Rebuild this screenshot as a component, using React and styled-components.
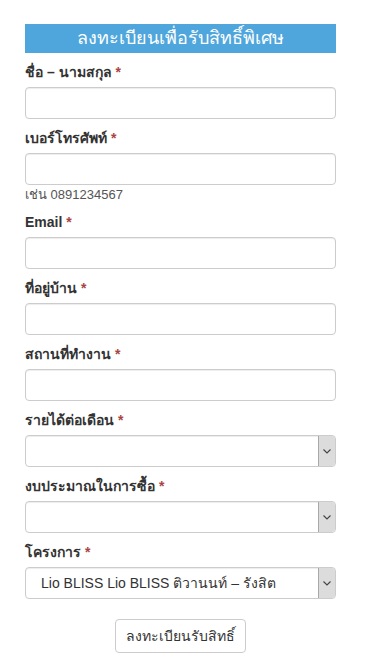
import React from 'react';
import styled, { createGlobalStyle } from 'styled-components';

const GlobalStyle = createGlobalStyle`
  body {
    margin: 0;
    background: #fff;
    font-family: "Liberation Sans", "Noto Sans", sans-serif;
    color: #333;
  }
`;

const Page = styled.div`
  width: 311px;
  padding: 24px 0 0 25px;
`;

const Header = styled.h2`
  margin: 0 0 10px;
  height: 29px;
  line-height: 29px;
  background-color: #4ea6dc;
  color: #fff;
  font-size: 18px;
  font-weight: 400;
  text-align: center;
`;

const Group = styled.div`
  margin-bottom: 10px;
`;

const Label = styled.label`
  display: block;
  height: 18px;
  line-height: 18px;
  margin-bottom: 6px;
  font-size: 14px;
  font-weight: 700;
  color: #333;
`;

const Star = styled.span`
  color: #a94442;
`;

const Input = styled.input`
  display: block;
  box-sizing: border-box;
  width: 100%;
  height: 32px;
  margin: 0;
  padding: 6px 12px;
  border: 1px solid #ccc;
  border-radius: 4px;
  box-shadow: inset 0 1px 1px rgba(0, 0, 0, 0.075);
  font-family: inherit;
  font-size: 14px;
`;

const Help = styled.div`
  margin-top: 1px;
  font-size: 13px;
  line-height: 17px;
  color: #555;
`;

const SelectBox = styled.div`
  display: flex;
  box-sizing: border-box;
  height: 32px;
  border: 1px solid #ccc;
  border-radius: 4px;
  box-shadow: inset 0 1px 1px rgba(0, 0, 0, 0.075);
  overflow: hidden;
`;

const Select = styled.select`
  flex: 1;
  min-width: 0;
  appearance: none;
  border: 0;
  background: transparent;
  padding: 0 12px 0 15px;
  font-family: inherit;
  font-size: 14px;
  color: #333;
  outline: none;
`;

const Arrow = styled.div`
  width: 16px;
  display: flex;
  align-items: center;
  justify-content: center;
  background: #dcdcdc;
  border-left: 1px solid #a8a8a8;
`;

const Actions = styled.div`
  display: flex;
  justify-content: center;
  padding-top: 10px;
`;

const Button = styled.button`
  height: 34px;
  padding: 0 10px;
  border: 1px solid #ccc;
  border-radius: 4px;
  background: #fff;
  color: #333;
  font-family: inherit;
  font-size: 14px;
`;

function Chevron() {
  return (
    <svg width="8" height="5" viewBox="0 0 8 5">
      <path d="M0.5 0.5 L4 4 L7.5 0.5" fill="none" stroke="#444" strokeWidth="1.1" />
    </svg>
  );
}

function Field({ label, help }) {
  return (
    <Group>
      <Label>
        {label} <Star>*</Star>
      </Label>
      <Input type="text" />
      {help && <Help>{help}</Help>}
    </Group>
  );
}

function Dropdown({ label, value }) {
  return (
    <Group>
      <Label>
        {label} <Star>*</Star>
      </Label>
      <SelectBox>
        <Select defaultValue={value || ''}>
          <option value={value || ''}>{value || ''}</option>
        </Select>
        <Arrow>
          <Chevron />
        </Arrow>
      </SelectBox>
    </Group>
  );
}

export default function App() {
  return (
    <>
      <GlobalStyle />
      <Page>
        <Header>ลงทะเบียนเพื่อรับสิทธิ์พิเศษ</Header>
        <Field label="ชื่อ – นามสกุล" />
        <Field label="เบอร์โทรศัพท์" help="เช่น 0891234567" />
        <Field label="Email" />
        <Field label="ที่อยู่บ้าน" />
        <Field label="สถานที่ทำงาน" />
        <Dropdown label="รายได้ต่อเดือน" />
        <Dropdown label="งบประมาณในการซื้อ" />
        <Dropdown label="โครงการ" value="Lio BLISS Lio BLISS ติวานนท์ – รังสิต" />
        <Actions>
          <Button>ลงทะเบียนรับสิทธิ์</Button>
        </Actions>
      </Page>
    </>
  );
}
